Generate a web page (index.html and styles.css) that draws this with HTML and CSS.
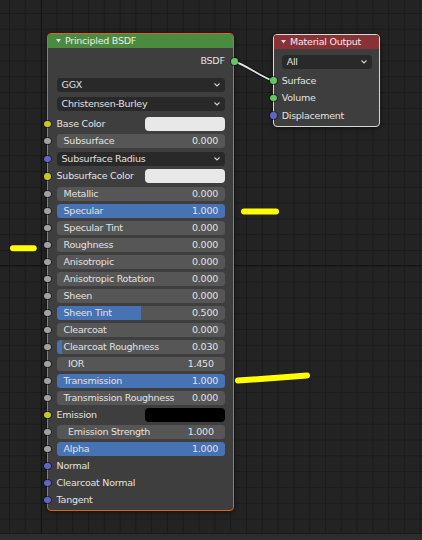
FILE: index.html
```html
<!DOCTYPE html>
<html>
<head>
<meta charset="utf-8">
<link rel="stylesheet" href="styles.css">
</head>
<body>
<div class="screen">
  <div class="editor">
    <svg class="wires" width="422" height="534" viewBox="0 0 422 534">
      <path d="M234 61.5 C245 64 262 78 273.3 80.7" class="wire-shadow"/>
      <path d="M234 61.5 C245 64 262 78 273.3 80.7" class="wire"/>
    </svg>

    <div class="node principled">
      <div class="node-header hdr-shader">
        <svg class="tri" width="5" height="4" viewBox="0 0 5 4"><polygon points="0,0 5,0 2.5,3.6"/></svg>
        <span class="title">Principled BSDF</span>
      </div>
      <div class="node-body">
        <div class="field out-row"><span>BSDF</span><i class="sock sock-out s-shader"></i></div>
        <div class="field menu gap-menu1"><span>GGX</span><svg class="chev" width="6" height="4" viewBox="0 0 6 4"><polyline points="0.5,0.5 3,3 5.5,0.5"/></svg></div>
        <div class="field menu gap-5"><span>Christensen-Burley</span><svg class="chev" width="6" height="4" viewBox="0 0 6 4"><polyline points="0.5,0.5 3,3 5.5,0.5"/></svg></div>
        <div class="field color-row gap-base"><i class="sock s-color"></i><span class="plain">Base Color</span><span class="swatch sw-light"></span></div>
        <div class="field slider" style="--v:0%"><i class="sock s-float"></i><span>Subsurface</span><span>0.000</span></div>
        <div class="field menu gap-radius"><i class="sock s-vector"></i><span>Subsurface Radius</span><svg class="chev" width="6" height="4" viewBox="0 0 6 4"><polyline points="0.5,0.5 3,3 5.5,0.5"/></svg></div>
        <div class="field color-row gap-34"><i class="sock s-color"></i><span class="plain">Subsurface Color</span><span class="swatch sw-light"></span></div>
        <div class="field slider gap-34" style="--v:0%"><i class="sock s-float"></i><span>Metallic</span><span>0.000</span></div>
        <div class="field slider" style="--v:100%"><i class="sock s-float"></i><span>Specular</span><span>1.000</span></div>
        <div class="field slider" style="--v:0%"><i class="sock s-float"></i><span>Specular Tint</span><span>0.000</span></div>
        <div class="field slider" style="--v:0%"><i class="sock s-float"></i><span>Roughness</span><span>0.000</span></div>
        <div class="field slider" style="--v:0%"><i class="sock s-float"></i><span>Anisotropic</span><span>0.000</span></div>
        <div class="field slider" style="--v:0%"><i class="sock s-float"></i><span>Anisotropic Rotation</span><span>0.000</span></div>
        <div class="field slider" style="--v:0%"><i class="sock s-float"></i><span>Sheen</span><span>0.000</span></div>
        <div class="field slider" style="--v:50%"><i class="sock s-float"></i><span>Sheen Tint</span><span>0.500</span></div>
        <div class="field slider" style="--v:0%"><i class="sock s-float"></i><span>Clearcoat</span><span>0.000</span></div>
        <div class="field slider" style="--v:3%"><i class="sock s-float"></i><span>Clearcoat Roughness</span><span>0.030</span></div>
        <div class="field slider number" style="--v:0%"><i class="sock s-float"></i><span>IOR</span><span>1.450</span></div>
        <div class="field slider" style="--v:100%"><i class="sock s-float"></i><span>Transmission</span><span>1.000</span></div>
        <div class="field slider" style="--v:0%"><i class="sock s-float"></i><span>Transmission Roughness</span><span>0.000</span></div>
        <div class="field color-row"><i class="sock s-color"></i><span class="plain">Emission</span><span class="swatch sw-black"></span></div>
        <div class="field slider number" style="--v:0%"><i class="sock s-float"></i><span>Emission Strength</span><span>1.000</span></div>
        <div class="field slider" style="--v:100%"><i class="sock s-float"></i><span>Alpha</span><span>1.000</span></div>
        <div class="field socket-row"><i class="sock s-vector"></i><span class="plain">Normal</span></div>
        <div class="field socket-row"><i class="sock s-vector"></i><span class="plain">Clearcoat Normal</span></div>
        <div class="field socket-row"><i class="sock s-vector"></i><span class="plain">Tangent</span></div>
      </div>
    </div>

    <div class="node output">
      <div class="node-header hdr-output">
        <svg class="tri" width="5" height="4" viewBox="0 0 5 4"><polygon points="0,0 5,0 2.5,3.6"/></svg>
        <span class="title">Material Output</span>
      </div>
      <div class="node-body out-body">
        <div class="field menu gap-all"><span>All</span><svg class="chev" width="6" height="4" viewBox="0 0 6 4"><polyline points="0.5,0.5 3,3 5.5,0.5"/></svg></div>
        <div class="field socket-row gap-surface"><i class="sock s-shader o-sock"></i><span class="plain">Surface</span></div>
        <div class="field socket-row gap-volume"><i class="sock s-shader o-sock"></i><span class="plain">Volume</span></div>
        <div class="field socket-row gap-disp"><i class="sock s-vector o-sock"></i><span class="plain">Displacement</span></div>
      </div>
    </div>

    <svg class="marks" width="422" height="534" viewBox="0 0 422 534">
      <line x1="244" y1="211.6" x2="276" y2="211.6"/>
      <line x1="13" y1="248.3" x2="33.7" y2="248.3"/>
      <line x1="238" y1="380.6" x2="307" y2="375.4"/>
    </svg>
  </div>
  <div class="footer"></div>
</div>
</body>
</html>
```

FILE: styles.css
```css
html, body {
  margin: 0;
  padding: 0;
  background: #232323;
}

.screen {
  width: 422px;
  height: 540px;
  display: flex;
  flex-direction: column;
  overflow: hidden;
  font-family: "DejaVu Sans", "Liberation Sans", sans-serif;
  font-size: 9.5px;
  letter-spacing: -0.25px;
  color: #e2e2e2;
}

.editor {
  position: relative;
  height: 533px;
  flex: none;
  background-color: #232323;
  background-image:
    linear-gradient(to right, transparent 41px, #131313 41px, #131313 42px, transparent 42px),
    linear-gradient(to bottom, transparent 265.5px, #131313 265.5px, #131313 266.5px, transparent 266.5px),
    linear-gradient(to right, #1b1b1b 1px, transparent 1px),
    linear-gradient(to bottom, #1b1b1b 1px, transparent 1px);
  background-size: 100% 100%, 100% 100%, 15.8px 15.8px, 15.8px 15.8px;
  background-repeat: no-repeat, no-repeat, repeat, repeat;
  background-position: 0 0, 0 0, 9px 13px, 9px 13px;
}

.footer {
  flex: 1;
  background: #2d2d2d;
  border-top: 1px solid #1a1a1a;
}

.wires, .marks {
  position: absolute;
  left: 0;
  top: 0;
  pointer-events: none;
}

.marks {
  z-index: 5;
}

.marks line {
  stroke: #ffff00;
  stroke-width: 6;
  stroke-linecap: round;
}

.wire {
  fill: none;
  stroke: #e4e4e4;
  stroke-width: 1.8;
}

.wire-shadow {
  fill: none;
  stroke: rgba(0, 0, 0, 0.55);
  stroke-width: 3.4;
}

/* nodes */
.node {
  position: absolute;
  box-sizing: border-box;
  background: #3e3e3e;
  border-radius: 4px;
  box-shadow: 0 1px 5px rgba(0, 0, 0, 0.55);
  z-index: 2;
}

.principled {
  left: 47.3px;
  top: 33.3px;
  width: 186.4px;
  height: 478px;
  border: 1.5px solid #d6661c;
}

.output {
  left: 273.3px;
  top: 33.7px;
  width: 106.7px;
  height: 93.6px;
  border: 1px solid #d8d8d8;
}

.node-header {
  height: 14px;
  display: flex;
  align-items: center;
  border-radius: 3px 3px 0 0;
  color: #ececec;
}

.hdr-shader {
  background: #4b8a3f;
}

.hdr-output {
  background: #8a3136;
}

.tri {
  margin-left: 7.7px;
  margin-right: 4px;
  fill: #dcdcdc;
}

.output .tri {
  margin-left: 6.8px;
}

.title {
  line-height: 14px;
}

.node-body {
  display: flex;
  flex-direction: column;
  padding: 0 7.4px 0 8.3px;
}

.out-body {
  padding: 0 6.7px 0 7.4px;
}

.field {
  position: relative;
  height: 14px;
  flex: none;
  margin-top: 3px;
  display: flex;
  align-items: center;
  box-sizing: border-box;
  line-height: 14px;
  white-space: nowrap;
}

.out-row {
  margin-top: 6.2px;
  justify-content: flex-end;
  padding-right: 0.7px;
}

.gap-menu1 { margin-top: 9.3px; }
.gap-5 { margin-top: 5px; }
.gap-base { margin-top: 6px; }
.gap-radius { margin-top: 4.2px; }
.gap-34 { margin-top: 3.4px; }
.gap-all { margin-top: 6px; }
.gap-surface { margin-top: 5px; }
.gap-volume { margin-top: 3.3px; }
.gap-disp { margin-top: 3.7px; }

.menu {
  background: #292929;
  border-radius: 3.5px;
  padding: 0 5px 0 5px;
  justify-content: space-between;
  color: #e0e0e0;
}

.chev {
  fill: none;
  stroke: #cfcfcf;
  stroke-width: 1.1;
  margin-right: 0.5px;
}

.slider {
  background: linear-gradient(to right, #4772b3 var(--v), #565656 var(--v));
  border-radius: 3.5px;
  padding: 0 7.3px 0 7px;
  justify-content: space-between;
  color: #e2e2e2;
}

.slider.number {
  padding: 0 11.6px 0 11.4px;
}

.color-row {
  justify-content: space-between;
}

.swatch {
  width: 80px;
  height: 14px;
  border-radius: 4px;
}

.sw-light {
  background: #e8e8e8;
}

.sw-black {
  background: #000000;
}

.plain {
  color: #e2e2e2;
}

/* sockets */
.sock {
  position: absolute;
  left: -12.25px;
  top: 50%;
  width: 6.5px;
  height: 6.5px;
  margin-top: -3.25px;
  border-radius: 50%;
  box-shadow: 0 0 0 0.7px rgba(0, 0, 0, 0.65);
}

.sock-out {
  left: auto;
  right: -12.25px;
}

.o-sock {
  left: -11.7px;
}

.s-float { background: #a1a1a1; }
.s-color { background: #c7c729; }
.s-vector { background: #6363c7; }
.s-shader { background: #63c763; }
```
